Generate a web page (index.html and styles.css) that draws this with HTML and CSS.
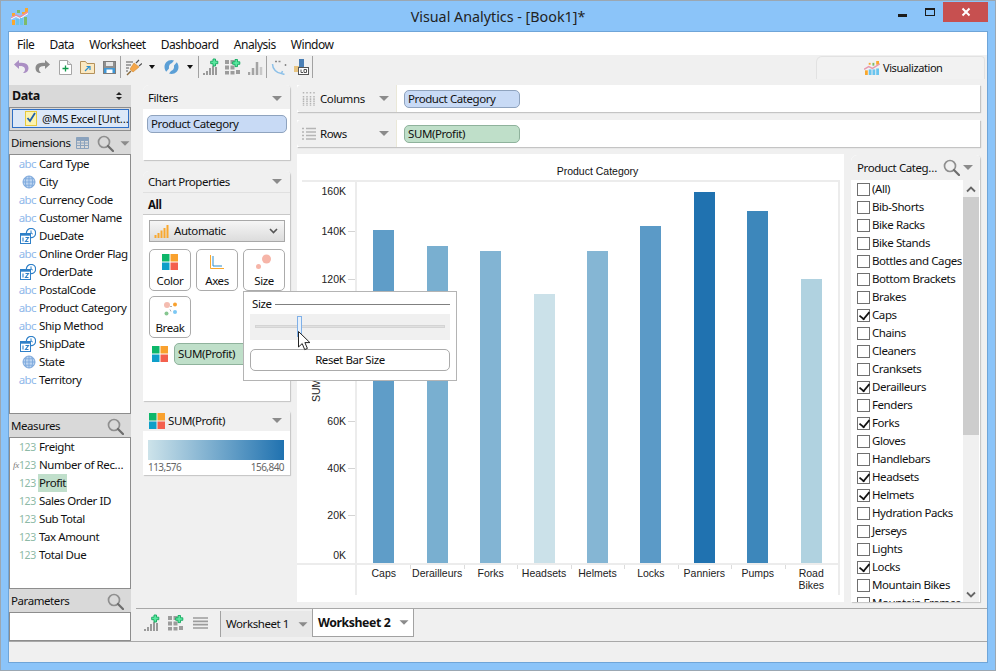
FILE: index.html
```html
<!DOCTYPE html>
<html lang="en">
<head>
<meta charset="utf-8">
<title>Visual Analytics - [Book1]*</title>
<link rel="stylesheet" href="styles.css">
</head>
<body>
<svg class="defs" width="0" height="0" aria-hidden="true">
  <symbol id="swatch" viewBox="0 0 16 16">
    <rect x="0" y="0" width="7.5" height="7.5" fill="#0db76a"/><rect x="8.5" y="0" width="7.5" height="7.5" fill="#f9a12e"/>
    <rect x="0" y="8.5" width="7.5" height="7.5" fill="#0e9fc9"/><rect x="8.5" y="8.5" width="7.5" height="7.5" fill="#f4604e"/>
  </symbol>
  <symbol id="search" viewBox="0 0 17 17">
    <circle cx="7" cy="7" r="5.5" fill="none" stroke="#8f8f8f" stroke-width="1.7"/>
    <path d="M11 11l5 5" stroke="#6d6d6d" stroke-width="2.2" stroke-linecap="round"/>
  </symbol>
  <symbol id="date" viewBox="0 0 16 16">
    <circle cx="11" cy="5" r="4.6" fill="#fff" stroke="#2f80c8" stroke-width="1.2"/><path d="M11 2.4V5l1.8 1" fill="none" stroke="#2f80c8"/>
    <rect x="0.5" y="5.5" width="10" height="10" fill="#fff" stroke="#2f80c8"/><rect x="0.5" y="5.5" width="10" height="2.2" fill="#2f80c8"/>
    <path d="M3 9.5v4M5.5 9.5h3l-3 4h3" fill="none" stroke="#2f80c8" stroke-width="1.1"/>
  </symbol>
  <symbol id="globe" viewBox="0 0 14 14">
    <circle cx="7" cy="7" r="6" fill="#bcd4f0" stroke="#7fa9dc"/>
    <path d="M1 7h12M2 3.8h10M2 10.2h10M7 1v12M4.4 1.8C3 5 3 9 4.4 12.2M9.6 1.8C11 5 11 9 9.6 12.2" fill="none" stroke="#6f9fd8" stroke-width=".7"/>
  </symbol>
  <symbol id="addbars" viewBox="0 0 16 18">
    <path d="M1 15v2M4 13v4M7 10v7M10 8v9M13 9v8" stroke="#9a9a9a" stroke-width="2" fill="none"/>
    <path d="M10 1h2.500v2.200h2.300v2.500h-2.300v2.300H10V5.700H7.700V3.200H10z" fill="#5ae8a0" stroke="#13a85e" stroke-width=".9"/>
  </symbol>
  <symbol id="addgrid" viewBox="0 0 16 16">
    <path d="M0 1h4v4H0zM5.500 1h4v4h-4zM0 6.500h4v4H0zM5.500 6.500h4v4h-4zM11 11h4v4h-4zM0 12h4v3.500H0zM5.500 12h4v3.500h-4z" fill="#9c9c9c"/>
    <path d="M10 .5h2.500v2.300h2.300v2.500h-2.300v2.300H10V5.300H7.700V2.800H10z" fill="#5ae8a0" stroke="#13a85e" stroke-width=".9"/>
  </symbol>
</svg>

<div class="window">
  <header class="titlebar">
    <svg class="applogo" width="17" height="17" viewBox="0 0 17 17">
      <rect x="1" y="5" width="3" height="3" fill="#f9a82e"/><rect x="6" y="2" width="3" height="3" fill="#7dbb6a"/><rect x="11" y="4" width="3" height="2" fill="#f9a82e"/><rect x="14" y="0" width="3" height="5" fill="#f9a82e"/>
      <path d="M0 10l5-3 4 2 8-5" fill="none" stroke="#f08fa0" stroke-width="1.500"/><path d="M0 11l5-2.500 4 2 8-5" fill="none" stroke="#fff" stroke-width="1"/>
      <rect x="1" y="12" width="3" height="5" fill="#f9a82e"/><rect x="5" y="11" width="3" height="6" fill="#6ac4ee"/><rect x="9" y="10" width="3" height="7" fill="#6ac4ee"/><rect x="13" y="9" width="3" height="8" fill="#7dbb6a"/>
    </svg>
    <div class="wintitle">Visual Analytics - [Book1]*</div>
    <div class="winctrl">
      <span class="wc-min"></span><span class="wc-max"></span>
      <span class="wc-close"><svg width="10" height="10" viewBox="0 0 10 10"><path d="M1.500 1.500l7 7M8.500 1.500l-7 7" stroke="#fff" stroke-width="2"/></svg></span>
    </div>
  </header>

  <div class="client">
    <nav class="menubar"><span>File</span><span>Data</span><span>Worksheet</span><span>Dashboard</span><span>Analysis</span><span>Window</span></nav>

    <div class="toolbar">
      <span class="tb"><svg width="16" height="16" viewBox="0 0 16 16"><path d="M6 1L1 5.500 6 10V7c3 0 6 .5 6 3.500 0 1.500-1 2.500-2 3.500 3.500 0 5.500-2 5.500-5C15.500 4.500 11 3.500 6 3.700z" fill="#ab8fc4"/></svg></span>
      <span class="tb"><svg width="16" height="16" viewBox="0 0 16 16"><path d="M10 1l5 4.500L10 10V7c-3 0-6 .5-6 3.500 0 1.500 1 2.500 2 3.500-3.500 0-5.500-2-5.500-5C.5 4.500 5 3.500 10 3.700z" fill="#8a8a8a"/></svg></span>
      <span class="tb"><svg width="13" height="15" viewBox="0 0 13 15"><path d="M.5.5h8l4 4v10H.5z" fill="#fff" stroke="#a6a6a6"/><path d="M8.500.5v4h4" fill="#e8e8e8" stroke="#a6a6a6"/><path d="M6.500 5.500v6M3.500 8.500h6" stroke="#109a4a" stroke-width="1.300"/></svg></span>
      <span class="tb"><svg width="15" height="13" viewBox="0 0 15 13"><path d="M.5 12.500V.5h5l1.500 2h7.500v10z" fill="#fbe9c2" stroke="#b4915a"/><path d="M5 10l4-4M6.500 5.500H10V9" fill="none" stroke="#2a8fd0" stroke-width="1.200"/></svg></span>
      <span class="tb"><svg width="13" height="13" viewBox="0 0 13 13"><rect x=".5" y=".5" width="12" height="12" fill="#8f8f8f" stroke="#7d7d7d"/><rect x="3" y="1" width="7" height="4" fill="#e6e6e6"/><rect x="1" y="7" width="11" height="5" fill="#3f97d6"/><rect x="3.500" y="8.500" width="6" height="3.500" fill="#fff"/></svg></span>
      <span class="tbsep"></span>
      <span class="tb"><svg width="17" height="17" viewBox="0 0 17 17"><path d="M1 3h7M1 6h5M1 9h3M1 12h2" stroke="#8a8a8a" stroke-width="1.500"/><path d="M2 16l4-4" stroke="#8a6a3a" stroke-width="1.500"/><path d="M5 10l4-6 5 4-6 5z" fill="#f4a64a" stroke="#d28a30" stroke-width=".6"/><path d="M11 4l3-3M14 7l3-2.500" stroke="#555" stroke-width="1.200"/></svg></span>
      <span class="tbcaret"><i></i></span>
      <span class="tb"><svg width="15" height="16" viewBox="0 0 15 16"><path d="M7.500 1C3.500 1 .5 4 .5 8c0 1.800.7 3.400 1.700 4.700L5 9.500C4.500 6.500 6 4.500 8 4l2-2.500zM7.500 15c4 0 7-3 7-7 0-1.800-.7-3.400-1.700-4.700L10 6.500c.5 3-1 5-3 5.500L5 14.500z" fill="#5b9fd6"/></svg></span>
      <span class="tbcaret"><i></i></span>
      <span class="tbsep"></span>
      <span class="tb"><svg width="16" height="18"><use href="#addbars"/></svg></span>
      <span class="tb"><svg width="16" height="16"><use href="#addgrid"/></svg></span>
      <span class="tb"><svg width="15" height="15" viewBox="0 0 15 15"><path d="M1 12v3M5 8v7M9 2v13" stroke="#a4a4a4" stroke-width="2.500"/><path d="M13 7v8" stroke="#c8c8c8" stroke-width="2.500"/></svg></span>
      <span class="tbsep"></span>
      <span class="tb"><svg width="16" height="15" viewBox="0 0 16 15"><path d="M4 1.500h7M14.500 4v3" stroke="#8a8a8a" stroke-width="1.500" stroke-dasharray="2 1.500"/><path d="M1.500 4c0 5 4 9 9 9.500M11.500 11l-1 2.500 3 1" fill="none" stroke="#8cc0e8" stroke-width="1.500"/></svg></span>
      <span class="tb"><svg width="15" height="16" viewBox="0 0 15 16"><rect x="0" y="7" width="5" height="6" fill="#e8c480"/><rect x="5" y="0" width="5" height="9" fill="#4a7fb5"/><rect x="4.500" y="8.500" width="10" height="7" fill="#fff" stroke="#555"/><path d="M7 10.500v3h2M10 10.500h2.500v3H10z" fill="none" stroke="#555"/></svg></span>
      <span class="tbsep"></span>
      <div class="viztab">
        <svg width="16" height="14" viewBox="0 0 17 15"><rect x="9" y="2" width="2" height="3" fill="#7dbb6a"/><rect x="13" y="0" width="3" height="4" fill="#f9a82e"/><rect x="5" y="2" width="2" height="2" fill="#f9a82e"/><path d="M0 9l5-3 4 2 8-5" fill="none" stroke="#e79ab0" stroke-width="1.500"/><rect x="1" y="10" width="3" height="5" fill="#f9a82e"/><rect x="5" y="9" width="3" height="6" fill="#6ac4ee"/><rect x="9" y="9" width="3" height="6" fill="#6ac4ee"/><rect x="13" y="8" width="3" height="7" fill="#6ac4ee"/></svg>
        <span>Visualization</span>
      </div>
    </div>

    <div class="workspace">
      <aside class="datacol">
        <div class="datahead"><b>Data</b><span class="updown"><i></i><i></i></span></div>
        <div class="source"><div class="source-sel">
          <svg width="13" height="15" viewBox="0 0 13 15"><rect x=".5" y=".5" width="11" height="14" fill="#fbf3b0" stroke="#e8c93c"/><path d="M2.500 7l2.500 3 5-8" fill="none" stroke="#1f5fa8" stroke-width="1.800"/></svg>
          <span>@MS Excel [Unt…</span>
        </div></div>
        <div class="sechead"><span>Dimensions</span>
          <svg class="tableicon" width="13" height="12" viewBox="0 0 13 12"><path d="M.5.500h12v11H.5zM.5 3.500h12M.5 6h12M.5 8.500h12M4.500.5v11M8.500.5v11" fill="none" stroke="#8aa2bd"/><rect x=".5" y=".5" width="12" height="2.500" fill="#8aa2bd"/></svg>
          <svg class="searchicon" width="17" height="17"><use href="#search"/></svg><i class="caret"></i>
        </div>
        <ul class="fields dims">
          <li><span class="abc">abc</span>Card Type</li>
          <li><span class="typeicon"><svg width="14" height="14"><use href="#globe"/></svg></span>City</li>
          <li><span class="abc">abc</span>Currency Code</li>
          <li><span class="abc">abc</span>Customer Name</li>
          <li><span class="typeicon"><svg width="16" height="16"><use href="#date"/></svg></span>DueDate</li>
          <li><span class="abc">abc</span>Online Order Flag</li>
          <li><span class="typeicon"><svg width="16" height="16"><use href="#date"/></svg></span>OrderDate</li>
          <li><span class="abc">abc</span>PostalCode</li>
          <li><span class="abc">abc</span>Product Category</li>
          <li><span class="abc">abc</span>Ship Method</li>
          <li><span class="typeicon"><svg width="16" height="16"><use href="#date"/></svg></span>ShipDate</li>
          <li><span class="typeicon"><svg width="14" height="14"><use href="#globe"/></svg></span>State</li>
          <li><span class="abc">abc</span>Territory</li>
        </ul>
        <div class="sechead"><span>Measures</span><svg class="searchicon end" width="17" height="17"><use href="#search"/></svg></div>
        <ul class="fields meas">
          <li><span class="num">123</span>Freight</li>
          <li><span class="num"><em>fx</em>123</span>Number of Rec…</li>
          <li><span class="num">123</span><mark>Profit</mark></li>
          <li><span class="num">123</span>Sales Order ID</li>
          <li><span class="num">123</span>Sub Total</li>
          <li><span class="num">123</span>Tax Amount</li>
          <li><span class="num">123</span>Total Due</li>
        </ul>
        <div class="sechead"><span>Parameters</span><svg class="searchicon end" width="17" height="17"><use href="#search"/></svg></div>
        <div class="params"></div>
      </aside>

      <div class="centerarea">
        <div class="panes">
          <div class="midcol">
            <section class="card filters">
              <div class="cardhead"><span>Filters</span><i class="caret"></i></div>
              <div class="pill blue filterpill">Product Category</div>
            </section>
            <section class="card props">
              <div class="cardhead"><span>Chart Properties</span><i class="caret"></i></div>
              <div class="allbar">All</div>
              <div class="typeselect">
                <svg width="15" height="13" viewBox="0 0 15 13"><path d="M1.500 10v3M4.500 8v5M7.500 5.500V13M10.500 3v10M13.500 0v13" stroke="#f9a82e" stroke-width="2"/></svg>
                <span>Automatic</span>
                <svg class="chev" width="9" height="6" viewBox="0 0 9 6"><path d="M1 1l3.500 3.500L8 1" fill="none" stroke="#555" stroke-width="1.600"/></svg>
              </div>
              <div class="propgrid">
                <div class="propbtn"><svg width="16" height="16"><use href="#swatch"/></svg><span>Color</span></div>
                <div class="propbtn"><svg width="14" height="14" viewBox="0 0 14 14"><path d="M.5 0v13.500H14" fill="none" stroke="#f9a82e"/><path d="M3 1v10h9" fill="none" stroke="#2a8fd0"/></svg><span>Axes</span></div>
                <div class="propbtn"><svg width="16" height="16" viewBox="0 0 16 16"><circle cx="10.500" cy="5" r="4.500" fill="#f6b5a8"/><circle cx="2.500" cy="12.500" r="2.500" fill="#f6b5a8"/></svg><span>Size</span></div>
                <div class="propbtn"><svg width="15" height="15" viewBox="0 0 15 15"><circle cx="4" cy="3.500" r="3" fill="#f4bcb0"/><circle cx="12" cy="3" r="2" fill="#f9a12e"/><circle cx="3.500" cy="12" r="2" fill="#86c690"/><circle cx="12" cy="10.500" r="2" fill="#7cc8f4"/><path d="M7 5h2M7 8l1 2" stroke="#999" stroke-width=".8"/></svg><span>Break</span></div>
              </div>
              <div class="proppill"><svg width="16" height="16"><use href="#swatch"/></svg><div class="pill green">SUM(Profit)</div></div>
            </section>
            <section class="card legend">
              <div class="cardhead legendhead"><svg width="16" height="16"><use href="#swatch"/></svg><span>SUM(Profit)</span><i class="caret"></i></div>
              <div class="gradient"></div>
              <div class="legendvals"><span>113,576</span><span>156,840</span></div>
            </section>
          </div>

          <div class="rightcol">
            <div class="shelf">
              <div class="shelfhead">
                <svg width="14" height="14" viewBox="0 0 14 14"><path d="M1.500 0v2M5 0v2M8.500 0v2M12 0v2M1.500 4v10M5 4v10M8.500 4v10M12 4v10" stroke="#b5b5b5" stroke-width="1.500" stroke-dasharray="1.600 .7"/></svg>
                <span>Columns</span><i class="caret"></i>
              </div>
              <div class="pill blue shelfpill">Product Category</div>
            </div>
            <div class="shelf">
              <div class="shelfhead">
                <svg width="14" height="14" viewBox="0 0 14 14"><path d="M0 1.500h2M0 5h2M0 8.500h2M0 12h2M4 1.500h10M4 5h10M4 8.500h10M4 12h10" stroke="#b5b5b5" stroke-width="1.500"/></svg>
                <span>Rows</span><i class="caret"></i>
              </div>
              <div class="pill green shelfpill">SUM(Profit)</div>
            </div>

            <div class="vizrow">
              <div class="chart">
                <div class="charttitle">Product Category</div>
                <div class="chartframe">
                  <div class="yaxis">
                    <span class="ylabel">SUM(Profit)</span>
                    <span class="tick" style="bottom:372px">160K</span>
                    <span class="tick mark" style="bottom:332px">140K</span>
                    <span class="tick mark" style="bottom:284px">120K</span>
                    <span class="tick mark" style="bottom:237px">100K</span>
                    <span class="tick mark" style="bottom:190px">80K</span>
                    <span class="tick mark" style="bottom:142px">60K</span>
                    <span class="tick mark" style="bottom:95px">40K</span>
                    <span class="tick mark" style="bottom:48px">20K</span>
                    <span class="tick" style="bottom:8px">0K</span>
                  </div>
                  <div class="bars">
                    <div class="barcell"><div class="bar" style="height:333px;background:#5f9dc8"></div></div>
                    <div class="barcell"><div class="bar" style="height:317px;background:#79afd0"></div></div>
                    <div class="barcell"><div class="bar" style="height:312px;background:#82b4d3"></div></div>
                    <div class="barcell"><div class="bar" style="height:269px;background:#cbe1e9"></div></div>
                    <div class="barcell"><div class="bar" style="height:312px;background:#85b6d4"></div></div>
                    <div class="barcell"><div class="bar" style="height:337px;background:#5b9ac7"></div></div>
                    <div class="barcell"><div class="bar" style="height:371px;background:#2072b0"></div></div>
                    <div class="barcell"><div class="bar" style="height:352px;background:#3d87bb"></div></div>
                    <div class="barcell"><div class="bar" style="height:284px;background:#b0d2e0"></div></div>
                  </div>
                  <div class="xcorner"></div>
                  <div class="xaxis">
                    <span>Caps</span><span>Derailleurs</span><span>Forks</span><span>Headsets</span><span>Helmets</span><span>Locks</span><span>Panniers</span><span>Pumps</span><span>Road<br>Bikes</span>
                  </div>
                </div>
              </div>

              <div class="card valuefilter">
                <div class="cardhead vfhead"><span>Product Categ…</span><svg width="17" height="17"><use href="#search"/></svg><i class="caret"></i></div>
                <div class="vfbody">
                  <ul class="checks">
                    <li><i class="cb"></i>(All)</li>
                    <li><i class="cb"></i>Bib-Shorts</li>
                    <li><i class="cb"></i>Bike Racks</li>
                    <li><i class="cb"></i>Bike Stands</li>
                    <li><i class="cb"></i>Bottles and Cages</li>
                    <li><i class="cb"></i>Bottom Brackets</li>
                    <li><i class="cb"></i>Brakes</li>
                    <li><i class="cb on"></i>Caps</li>
                    <li><i class="cb"></i>Chains</li>
                    <li><i class="cb"></i>Cleaners</li>
                    <li><i class="cb"></i>Cranksets</li>
                    <li><i class="cb on"></i>Derailleurs</li>
                    <li><i class="cb"></i>Fenders</li>
                    <li><i class="cb on"></i>Forks</li>
                    <li><i class="cb"></i>Gloves</li>
                    <li><i class="cb"></i>Handlebars</li>
                    <li><i class="cb on"></i>Headsets</li>
                    <li><i class="cb on"></i>Helmets</li>
                    <li><i class="cb"></i>Hydration Packs</li>
                    <li><i class="cb"></i>Jerseys</li>
                    <li><i class="cb"></i>Lights</li>
                    <li><i class="cb on"></i>Locks</li>
                    <li><i class="cb"></i>Mountain Bikes</li>
                    <li><i class="cb"></i>Mountain Frames</li>
                  </ul>
                  <div class="scrollbar">
                    <svg width="10" height="7" viewBox="0 0 10 7"><path d="M1 5.500l4-4 4 4" fill="none" stroke="#666" stroke-width="1.800"/></svg>
                    <div class="thumb"></div>
                    <svg class="down" width="10" height="7" viewBox="0 0 10 7"><path d="M1 1.500l4 4 4-4" fill="none" stroke="#666" stroke-width="1.800"/></svg>
                  </div>
                </div>
              </div>
            </div>
          </div>
        </div>

        <div class="sheetbar">
          <span class="sheeticon"><svg width="16" height="18"><use href="#addbars"/></svg></span>
          <span class="sheeticon"><svg width="16" height="16"><use href="#addgrid"/></svg></span>
          <span class="sheeticon"><svg width="15" height="12" viewBox="0 0 15 12"><path d="M0 1h15M0 4.300h15M0 7.600h15M0 11h15" stroke="#9c9c9c" stroke-width="1.700"/></svg></span>
          <div class="tab"><span>Worksheet 1</span><i class="caret"></i></div>
          <div class="tab active"><span>Worksheet 2</span><i class="caret"></i></div>
        </div>
      </div>

      <div class="popup">
        <div class="popuplabel"><span>Size</span><i></i></div>
        <div class="slider"><div class="track"></div><div class="thumbv"></div>
          <svg class="cursor" width="13" height="20" viewBox="0 0 13 20"><path d="M.5.500v15.500l3.700-3.400 2.500 6 2.700-1.200-2.500-5.800h5z" fill="#fff" stroke="#222"/></svg>
        </div>
        <div class="resetbtn">Reset Bar Size</div>
      </div>
    </div>

    <footer class="status"></footer>
  </div>
</div>
</body>
</html>
```

FILE: styles.css
```css
* { box-sizing: border-box; }
html, body { margin: 0; padding: 0; }
body { width: 996px; height: 671px; overflow: hidden; font: 11.5px/18px "Noto Sans", sans-serif; letter-spacing: -.42px; color: #111; }
.defs { position: absolute; }
svg { flex: none; }
ul { list-style: none; margin: 0; padding: 0; }
i, em { font-style: normal; }

.window { width: 996px; height: 671px; background: #8bc4f9; border: 1px solid #9ba7b2; display: flex; flex-direction: column; }
.titlebar { height: 31px; flex: none; display: flex; align-items: center; padding-left: 10px; position: relative; }
.applogo { margin-top: -1px; }
.wintitle { position: absolute; left: 0; right: 0; top: 6px; text-align: center; font-size: 14.300px; letter-spacing: 0; line-height: 20px; color: #222; }
.winctrl { position: absolute; right: 7px; top: 1px; display: flex; align-items: flex-start; }
.wc-min { width: 9px; height: 3px; background: #1c1c1c; margin: 12px 18px 0 0; }
.wc-max { width: 10px; height: 8px; border: 1px solid #1c1c1c; border-top-width: 2px; margin: 6px 8px 0 0; }
.wc-close { width: 45px; height: 20px; background: #c75050; display: flex; align-items: center; justify-content: center; }

.client { flex: 1; margin: 0 8px 8px; background: #f0f0f0; outline: 1px solid #6fa5d8; display: flex; flex-direction: column; min-height: 0; }
.menubar { height: 23px; flex: none; background: #fff; display: flex; align-items: center; padding: 3px 0 0 8px; font-size: 12px; letter-spacing: -.45px; }
.menubar span { margin-right: 15px; }
.toolbar { height: 30px; flex: none; display: flex; align-items: flex-start; padding: 1px 0 0 1px; background: #f0f0f0; }
.tb { width: 22px; height: 22px; display: flex; align-items: center; justify-content: center; }
.tbcaret { width: 16px; height: 22px; display: flex; align-items: center; justify-content: center; }
.tbcaret i { border: 3.500px solid transparent; border-top: 4px solid #111; border-bottom: 0; }
.tbsep { width: 2px; height: 22px; border-left: 1px solid #a2a2a2; }
.viztab { margin: 0 2px 0 auto; width: 169px; height: 23px; border: 1px solid #e2e2e2; border-bottom: 0; border-radius: 6px 4px 0 0; background: #f2f2f2; display: flex; align-items: center; padding-left: 47px; gap: 3px; font-size: 11px; }

.caret { width: 0; height: 0; border: 5px solid transparent; border-top: 5px solid #8b8b8b; border-bottom: 0; flex: none; }

.workspace { height: 556px; flex: none; display: flex; position: relative; }
.datacol { width: 122px; flex: none; display: flex; flex-direction: column; background: #f0f0f0; }
.datahead { height: 22px; flex: none; background: #d9d9d9; display: flex; align-items: center; justify-content: space-between; padding: 0 9px 0 3px; font-size: 12.500px; }
.updown { display: flex; flex-direction: column; gap: 2px; }
.updown i { border: 3px solid transparent; border-bottom: 3.500px solid #222; border-top: 0; }
.updown i + i { border-bottom: 0; border-top: 3.500px solid #222; }
.source { height: 24px; flex: none; border: 1px solid #8d8d8d; padding: 1px 1px 2px 2px; background: #d9d9d9; }
.source-sel { height: 100%; border: 1px solid #2f6fc4; background: #dce8f8; display: flex; align-items: center; padding-left: 12px; gap: 4px; white-space: nowrap; overflow: hidden; }
.sechead { height: 24px; flex: none; background: #d9d9d9; display: flex; align-items: center; padding: 0 7px 0 2px; white-space: nowrap; }
.tableicon { margin-left: 5px; }
.searchicon { margin-left: 8px; }
.searchicon.end { margin-left: auto; margin-right: 0; }
.sechead .caret { margin-left: 6px; transform: scale(.9); }
.fields { border: 1px solid #8d8d8d; background: #fff; white-space: nowrap; overflow: hidden; margin-top: -1px; }
.fields li { height: 18px; display: flex; align-items: center; padding-left: 29px; position: relative; }
.dims { height: 260px; }
.meas { height: 152px; }
.fields li > span:first-child { position: absolute; left: 0; top: 0; width: 28px; height: 18px; display: flex; align-items: center; justify-content: flex-end; padding-right: 2px; }
.abc { color: #8fb8ea; font: 400 11.500px/18px "Noto Sans", sans-serif; letter-spacing: -.6px; }
.num { color: #8dbaa6; font: 400 10.500px/18px "Noto Sans", sans-serif; letter-spacing: -.3px; }
.num em { font: italic 9px/10px "Liberation Serif", serif; color: #777; margin-right: 0; }
.typeicon { padding-right: 3px; }
mark { background: #c0dfcb; color: inherit; padding: 0 1px; margin-left: -1px; height: 18px; }
.params { flex: 1; border: 1px solid #8d8d8d; background: #fff; margin-top: -1px; }

.centerarea { flex: 1; min-width: 0; display: flex; flex-direction: column; }
.panes { height: 517px; flex: none; display: flex; padding: 0 7px 0 12px; gap: 7px; }
.midcol { width: 147px; flex: none; display: flex; flex-direction: column; }
.card { background: #fff; border-top-left-radius: 6px; border-top-right-radius: 4px; box-shadow: 1px 1px 1px #c4c4c4; }
.cardhead { background: #f0f0f0; display: flex; align-items: center; justify-content: space-between; padding: 0 8px 0 5px; border-radius: 6px 4px 0 0; }
.filters { height: 75px; margin-bottom: 11px; }
.filters .cardhead { height: 24px; padding-top: 2px; }
.pill { border-radius: 5px; height: 18px; line-height: 16px; padding-left: 3px; border: 1px solid #8aa0bb; white-space: nowrap; overflow: hidden; }
.pill.blue { background: #c8daf5; border-color: #8fa3be; }
.pill.green { background: #bfdfc9; border-color: #8fb29c; }
.filterpill { margin: 6px 3px 0 4px; }
.props { height: 230px; margin-bottom: 9px; }
.props .cardhead { height: 22px; border-bottom: 1px solid #e0e0e0; }
.allbar { height: 22px; background: #f0f0f0; border-bottom: 1px solid #c8c8c8; font-weight: 700; padding: 1px 0 0 5px; line-height: 21px; }
.typeselect { height: 22px; margin: 5px 5px 0 6px; border: 1px solid #a8a8a8; background: linear-gradient(#f6f6f6, #dcdcdc); display: flex; align-items: center; padding: 0 6px 0 4px; gap: 5px; }
.chev { margin-left: auto; }
.propgrid { display: grid; grid-template-columns: repeat(3, 42px); gap: 5px; margin: 7px 0 0 6px; }
.propbtn { height: 42px; border: 1px solid #ababab; border-radius: 5px; background: #fff; display: flex; flex-direction: column; align-items: center; justify-content: flex-start; padding-top: 4px; gap: 2px; }
.propbtn svg { height: 16px; }
.proppill { display: flex; align-items: center; gap: 6px; margin: 5px 0 0 9px; }
.proppill .pill { width: 112px; height: 22px; line-height: 20px; }
.legend { height: 65px; }
.legendhead { height: 21px; justify-content: flex-start; gap: 3px; padding-left: 6px; }
.legendhead .caret { margin-left: auto; }
.gradient { height: 20px; margin: 9px 6px 0 5px; background: linear-gradient(90deg, #cde3ea, #2072b0); }
.legendvals { display: flex; justify-content: space-between; margin: 0 6px 0 5px; font-size: 10px; letter-spacing: -.55px; line-height: 14px; color: #666; }

.rightcol { flex: 1; min-width: 0; display: flex; flex-direction: column; }
.shelf { height: 27px; flex: none; margin-bottom: 8px; background: #fff; display: flex; align-items: center; box-shadow: 1px 1px 1px #c4c4c4; }
.shelf + .shelf { margin-bottom: 7px; }
.shelfhead { width: 100px; height: 100%; background: #f0f0f0; border-right: 1px solid #eae8d8; display: flex; align-items: center; padding: 0 7px 0 5px; gap: 4px; border-radius: 4px 0 0 4px; }
.shelfhead .caret { margin-left: auto; }
.shelfpill { width: 116px; margin-left: 7px; }
.vizrow { flex: 1; min-height: 0; display: flex; gap: 7px; }
.chart { width: 547px; flex: none; background: #fff; padding: 0 4px 7px 5px; display: flex; flex-direction: column; }
.charttitle { height: 26px; flex: none; text-align: center; font: 10.500px/34px "Liberation Sans", sans-serif; letter-spacing: 0; padding: 0 2px 0 55px; }
.chartframe { flex: 1; display: grid; grid-template-columns: 55px 1fr; grid-template-rows: 381px 1fr; border-top: 2px solid #ececec; border-right: 2px solid #ececec; font: 10.500px/12px "Liberation Sans", sans-serif; letter-spacing: 0; color: #222; }
.yaxis { border-right: 2px solid #ececec; position: relative; }
.ylabel { position: absolute; left: 8px; top: 158px; height: 62px; white-space: nowrap; writing-mode: vertical-rl; transform: rotate(180deg); }
.tick { position: absolute; right: 9px; transform: translateY(50%); }
.tick.mark::after { content: ""; position: absolute; left: calc(100% + 2px); top: 6px; width: 7px; height: 1px; background: #d4d4d4; }
.bars { display: flex; }
.barcell { flex: 1; display: flex; align-items: flex-end; justify-content: center; }
.bar { width: 21px; }
.xcorner { border-top: 2px solid #ececec; border-right: 2px solid #ececec; margin-left: -5px; }
.xaxis { border-top: 2px solid #ececec; display: flex; }
.xaxis span { flex: 1; text-align: center; padding-top: 2px; background: linear-gradient(#dcdcdc, #dcdcdc) left top / 1px 4px no-repeat; }
.xaxis span:first-child { background: none; }
.valuefilter { flex: 1; min-width: 0; margin-top: 1px; overflow: hidden; display: flex; flex-direction: column; }
.vfhead { height: 25px; flex: none; padding: 0 7px 0 6px; gap: 3px; justify-content: flex-start; white-space: nowrap; }
.vfhead span { flex: 1; }
.vfbody { flex: 1; min-height: 0; display: flex; overflow: hidden; }
.checks { flex: 1; min-width: 0; white-space: nowrap; padding-left: 6px; }
.checks li { height: 18px; display: flex; align-items: center; gap: 2px; }
.cb { width: 13px; height: 13px; border: 1px solid #707070; background: #fff; flex: none; position: relative; }
.cb.on::after { content: ""; position: absolute; left: 1px; top: 1px; width: 9px; height: 5px; border-left: 2px solid #111; border-bottom: 2px solid #111; transform: rotate(-50deg) scale(.9); }
.scrollbar { width: 16px; flex: none; background: #f0f0f0; display: flex; flex-direction: column; align-items: center; margin-right: 1px; padding-top: 6px; }
.thumb { width: 16px; height: 238px; background: #cdcdcd; margin-top: 4px; flex: none; }
.scrollbar .down { margin-top: auto; margin-bottom: 4px; }

.sheetbar { flex: 1; margin: 6px 0 0 5px; border-top: 1px solid #a8a8a8; display: flex; align-items: flex-start; }
.sheeticon { width: 24px; height: 28px; display: flex; align-items: center; justify-content: center; }
.sheeticon:first-child { margin-left: 4px; }
.tab { display: flex; align-items: center; justify-content: space-between; padding: 0 4px 0 5px; width: 92px; background: #e8e8e8; border-left: 1px solid #a2a2a2; margin-left: 8px; margin-top: 2px; height: 26px; }
.tab .caret { transform: scale(.9); }
.tab.active { background: #fff; width: 102px; margin: 0; height: 28px; border: 1px solid #a2a2a2; border-top: 0; font-weight: 700; font-size: 12.300px; padding-left: 5px; }

.popup { position: absolute; left: 234px; top: 206px; width: 214px; height: 90px; background: #fff; border: 1px solid #b4b4b4; padding: 3px 6px 0; }
.popuplabel { display: flex; align-items: center; gap: 3px; height: 18px; padding-left: 2px; }
.popuplabel i { flex: 1; height: 1px; background: #808080; }
.slider { height: 26px; background: #f0f0f0; margin-top: 1px; position: relative; }
.track { position: absolute; left: 5px; right: 5px; top: 11px; height: 3px; background: #e0e0e0; border: 1px solid #d4d4d4; }
.thumbv { position: absolute; left: 47px; top: 2px; width: 5px; height: 21px; border: 1px solid #7fb0e8; background: #e8f1fb; }
.cursor { position: absolute; left: 48px; top: 17px; }
.resetbtn { height: 22px; margin-top: 9px; border: 1px solid #ababab; border-radius: 5px; text-align: center; line-height: 20px; }

.status { height: 21px; flex: none; border-top: 1px solid #a8a8a8; background: #f0f0f0; }
```
